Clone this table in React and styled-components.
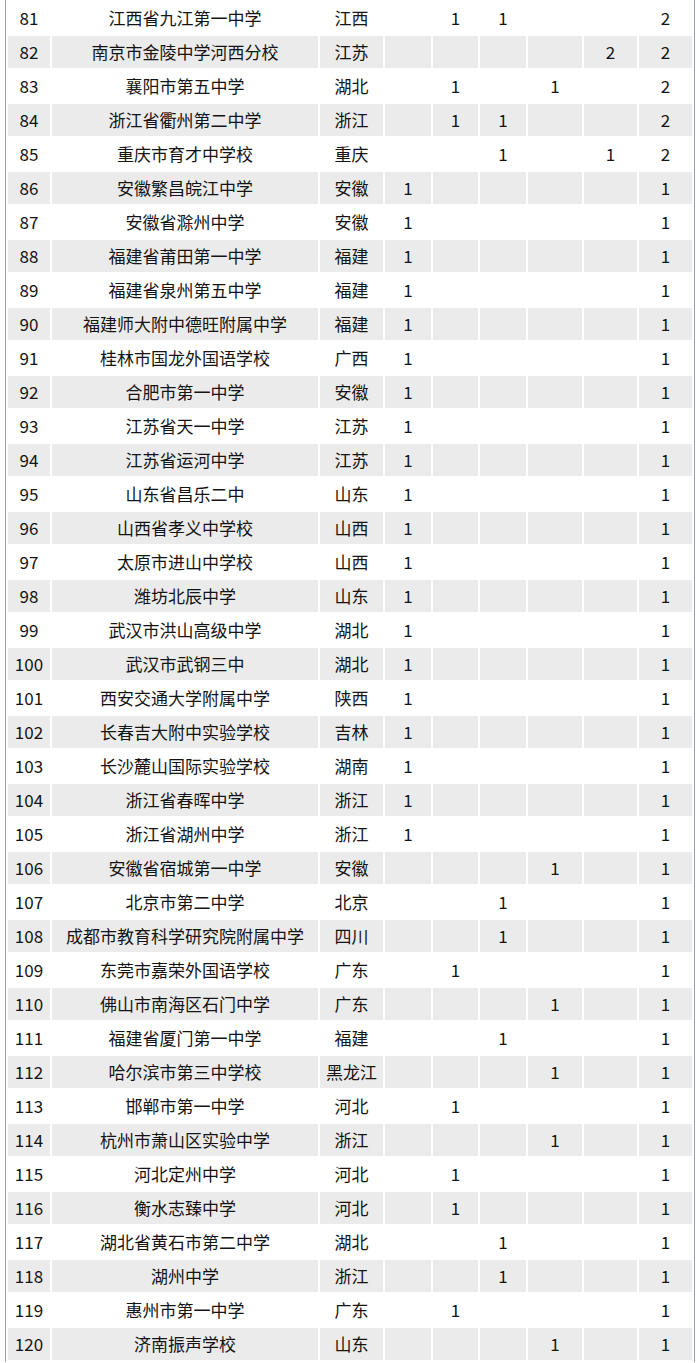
import React from "react";
import styled, { createGlobalStyle } from "styled-components";

const GlobalStyle = createGlobalStyle`
  html, body {
    margin: 0;
    padding: 0;
    background: #ffffff;
  }
  body {
    font-family: "Noto Sans CJK SC", "Noto Sans", sans-serif;
  }
`;

const Page = styled.div`
  width: 700px;
  height: 1363px;
  overflow: hidden;
  padding: 0 0 0 5px;
  box-sizing: border-box;
`;

const Table = styled.table`
  width: 690px;
  table-layout: fixed;
  border-collapse: separate;
  border-spacing: 2px;
  border-left: 1px solid #98a2ba;
  border-right: 1px solid #98a2ba;
  margin-top: 0;
  font-size: 17px;
  color: #141414;
`;

const Row = styled.tr`
  height: 32px;
`;

const Cell = styled.td`
  padding: 0;
  height: 32px;
  text-align: center;
  vertical-align: middle;
  white-space: nowrap;
  line-height: 32px;
  background: ${(p) => (p.$shaded ? "#ebebeb" : "#ffffff")};
`;

const widths = [42, 266, 63, 46, 45, 46, 54, 53, 53];

// [rank, school, province, A, B, C, D, E, total]
const rows = [
  [81, "江西省九江第一中学", "江西", "", 1, 1, "", "", 2],
  [82, "南京市金陵中学河西分校", "江苏", "", "", "", "", 2, 2],
  [83, "襄阳市第五中学", "湖北", "", 1, "", 1, "", 2],
  [84, "浙江省衢州第二中学", "浙江", "", 1, 1, "", "", 2],
  [85, "重庆市育才中学校", "重庆", "", "", 1, "", 1, 2],
  [86, "安徽繁昌皖江中学", "安徽", 1, "", "", "", "", 1],
  [87, "安徽省滁州中学", "安徽", 1, "", "", "", "", 1],
  [88, "福建省莆田第一中学", "福建", 1, "", "", "", "", 1],
  [89, "福建省泉州第五中学", "福建", 1, "", "", "", "", 1],
  [90, "福建师大附中德旺附属中学", "福建", 1, "", "", "", "", 1],
  [91, "桂林市国龙外国语学校", "广西", 1, "", "", "", "", 1],
  [92, "合肥市第一中学", "安徽", 1, "", "", "", "", 1],
  [93, "江苏省天一中学", "江苏", 1, "", "", "", "", 1],
  [94, "江苏省运河中学", "江苏", 1, "", "", "", "", 1],
  [95, "山东省昌乐二中", "山东", 1, "", "", "", "", 1],
  [96, "山西省孝义中学校", "山西", 1, "", "", "", "", 1],
  [97, "太原市进山中学校", "山西", 1, "", "", "", "", 1],
  [98, "潍坊北辰中学", "山东", 1, "", "", "", "", 1],
  [99, "武汉市洪山高级中学", "湖北", 1, "", "", "", "", 1],
  [100, "武汉市武钢三中", "湖北", 1, "", "", "", "", 1],
  [101, "西安交通大学附属中学", "陕西", 1, "", "", "", "", 1],
  [102, "长春吉大附中实验学校", "吉林", 1, "", "", "", "", 1],
  [103, "长沙麓山国际实验学校", "湖南", 1, "", "", "", "", 1],
  [104, "浙江省春晖中学", "浙江", 1, "", "", "", "", 1],
  [105, "浙江省湖州中学", "浙江", 1, "", "", "", "", 1],
  [106, "安徽省宿城第一中学", "安徽", "", "", "", 1, "", 1],
  [107, "北京市第二中学", "北京", "", "", 1, "", "", 1],
  [108, "成都市教育科学研究院附属中学", "四川", "", "", 1, "", "", 1],
  [109, "东莞市嘉荣外国语学校", "广东", "", 1, "", "", "", 1],
  [110, "佛山市南海区石门中学", "广东", "", "", "", 1, "", 1],
  [111, "福建省厦门第一中学", "福建", "", "", 1, "", "", 1],
  [112, "哈尔滨市第三中学校", "黑龙江", "", "", "", 1, "", 1],
  [113, "邯郸市第一中学", "河北", "", 1, "", "", "", 1],
  [114, "杭州市萧山区实验中学", "浙江", "", "", "", 1, "", 1],
  [115, "河北定州中学", "河北", "", 1, "", "", "", 1],
  [116, "衡水志臻中学", "河北", "", 1, "", "", "", 1],
  [117, "湖北省黄石市第二中学", "湖北", "", "", 1, "", "", 1],
  [118, "湖州中学", "浙江", "", "", 1, "", "", 1],
  [119, "惠州市第一中学", "广东", "", 1, "", "", "", 1],
  [120, "济南振声学校", "山东", "", "", "", 1, "", 1],
];

export default function App() {
  return (
    <>
      <GlobalStyle />
      <Page>
        <Table>
          <colgroup>
            {widths.map((w, i) => (
              <col key={i} style={{ width: w }} />
            ))}
          </colgroup>
          <tbody>
            {rows.map((r) => (
              <Row key={r[0]}>
                {r.map((v, i) => (
                  <Cell key={i} $shaded={r[0] % 2 === 0}>
                    {v}
                  </Cell>
                ))}
              </Row>
            ))}
          </tbody>
        </Table>
      </Page>
    </>
  );
}
